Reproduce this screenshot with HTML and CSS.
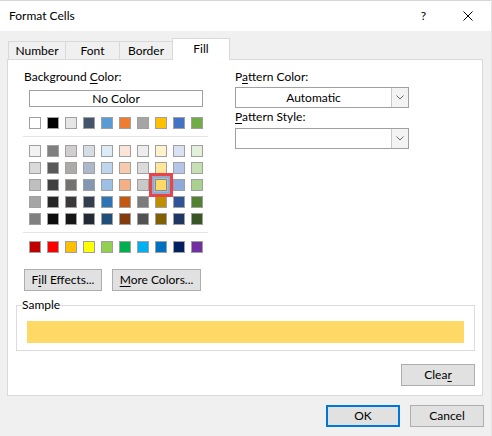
FILE: index.html
```html
<!DOCTYPE html>
<html>
<head>
<meta charset="utf-8">
<title>Format Cells</title>
<link rel="stylesheet" href="styles.css">
</head>
<body>
<div class="window">
  <div class="titlebar">
    <span class="title">Format Cells</span>
    <span class="help">?</span>
    <svg class="close" width="10" height="10" viewBox="0 0 10 10"><path d="M0.5 0.5 L9.5 9.5 M9.5 0.5 L0.5 9.5" stroke="#000" stroke-width="1" fill="none"/></svg>
  </div>
  <div class="content">
    <div class="tabs">
      <div class="tab t-number">Number</div>
      <div class="tab t-font">Font</div>
      <div class="tab t-border">Border</div>
      <div class="tab t-fill active">Fill</div>
    </div>
    <div class="panel">
      <div class="top">
        <div class="left">
          <div class="label">Background <u>C</u>olor:</div>
          <div class="nocolor">No Color</div>
          <div class="swrow theme">
            <span class="sw" style="background:#ffffff"></span>
            <span class="sw" style="background:#000000"></span>
            <span class="sw" style="background:#e7e6e6"></span>
            <span class="sw" style="background:#44546a"></span>
            <span class="sw" style="background:#5b9bd5"></span>
            <span class="sw" style="background:#ed7d31"></span>
            <span class="sw" style="background:#a5a5a5"></span>
            <span class="sw" style="background:#ffc000"></span>
            <span class="sw" style="background:#4472c4"></span>
            <span class="sw" style="background:#70ad47"></span>
          </div>
          <div class="sep"></div>
          <div class="grid">
            <span class="sw" style="background:#f2f2f2"></span>
            <span class="sw" style="background:#7f7f7f"></span>
            <span class="sw" style="background:#d0cece"></span>
            <span class="sw" style="background:#d6dce4"></span>
            <span class="sw" style="background:#ddebf7"></span>
            <span class="sw" style="background:#fce4d6"></span>
            <span class="sw" style="background:#ededed"></span>
            <span class="sw" style="background:#fff2cc"></span>
            <span class="sw" style="background:#d9e1f2"></span>
            <span class="sw" style="background:#e2efda"></span>

            <span class="sw" style="background:#d9d9d9"></span>
            <span class="sw" style="background:#595959"></span>
            <span class="sw" style="background:#aeaaaa"></span>
            <span class="sw" style="background:#acb9ca"></span>
            <span class="sw" style="background:#bdd7ee"></span>
            <span class="sw" style="background:#f8cbad"></span>
            <span class="sw" style="background:#dbdbdb"></span>
            <span class="sw" style="background:#ffe699"></span>
            <span class="sw" style="background:#b4c6e7"></span>
            <span class="sw" style="background:#c6e0b4"></span>

            <span class="sw" style="background:#bfbfbf"></span>
            <span class="sw" style="background:#404040"></span>
            <span class="sw" style="background:#757171"></span>
            <span class="sw" style="background:#8497b0"></span>
            <span class="sw" style="background:#9bc2e6"></span>
            <span class="sw" style="background:#f4b084"></span>
            <span class="sw" style="background:#c9c9c9"></span>
            <span class="sw selected" style="background:#ffd966"></span>
            <span class="sw" style="background:#8ea9db"></span>
            <span class="sw" style="background:#a9d08e"></span>

            <span class="sw" style="background:#a6a6a6"></span>
            <span class="sw" style="background:#262626"></span>
            <span class="sw" style="background:#3a3838"></span>
            <span class="sw" style="background:#333f4f"></span>
            <span class="sw" style="background:#2f75b5"></span>
            <span class="sw" style="background:#c65911"></span>
            <span class="sw" style="background:#7b7b7b"></span>
            <span class="sw" style="background:#bf8f00"></span>
            <span class="sw" style="background:#305496"></span>
            <span class="sw" style="background:#548235"></span>

            <span class="sw" style="background:#808080"></span>
            <span class="sw" style="background:#0d0d0d"></span>
            <span class="sw" style="background:#161616"></span>
            <span class="sw" style="background:#222b35"></span>
            <span class="sw" style="background:#1f4e78"></span>
            <span class="sw" style="background:#833c0c"></span>
            <span class="sw" style="background:#525252"></span>
            <span class="sw" style="background:#806000"></span>
            <span class="sw" style="background:#203764"></span>
            <span class="sw" style="background:#375623"></span>
          </div>
          <div class="sep"></div>
          <div class="swrow standard">
            <span class="sw" style="background:#c00000"></span>
            <span class="sw" style="background:#ff0000"></span>
            <span class="sw" style="background:#ffc000"></span>
            <span class="sw" style="background:#ffff00"></span>
            <span class="sw" style="background:#92d050"></span>
            <span class="sw" style="background:#00b050"></span>
            <span class="sw" style="background:#00b0f0"></span>
            <span class="sw" style="background:#0070c0"></span>
            <span class="sw" style="background:#002060"></span>
            <span class="sw" style="background:#7030a0"></span>
          </div>
          <div class="btnrow">
            <button class="btn b-fill">F<u>i</u>ll Effects...</button>
            <button class="btn b-more"><u>M</u>ore Colors...</button>
          </div>
        </div>
        <div class="right">
          <div class="label">P<u>a</u>ttern Color:</div>
          <div class="combo c1"><span class="combo-text">Automatic</span><span class="combo-btn"><svg width="8" height="5" viewBox="0 0 8 5"><path d="M0.5 0.5 L4 4 L7.5 0.5" stroke="#6a6a6a" fill="none" stroke-width="1"/></svg></span></div>
          <div class="label l2"><u>P</u>attern Style:</div>
          <div class="combo c2"><span class="combo-text"></span><span class="combo-btn"><svg width="8" height="5" viewBox="0 0 8 5"><path d="M0.5 0.5 L4 4 L7.5 0.5" stroke="#6a6a6a" fill="none" stroke-width="1"/></svg></span></div>
        </div>
      </div>
      <fieldset class="sample">
        <legend>Sample</legend>
        <div class="samplebar"></div>
      </fieldset>
      <div class="clearrow">
        <button class="btn b-clear">Clea<u>r</u></button>
      </div>
    </div>
    <div class="footer">
      <button class="btn b-ok">OK</button>
      <button class="btn b-cancel">Cancel</button>
    </div>
  </div>
</div>
</body>
</html>
```

FILE: styles.css
```css
html, body {
  margin: 0;
  padding: 0;
}
body {
  width: 492px;
  height: 436px;
  overflow: hidden;
  background: #f0f0f0;
  font-family: "Lato", "Noto Sans", sans-serif;
  font-size: 12px;
  line-height: 16px;
  color: #000;
}
u {
  text-decoration: underline;
  text-underline-offset: 2px;
}
.window {
  width: 491px;
  height: 436px;
  background: #f0f0f0;
  border-right: 1px solid #e3e3e3;
}
.titlebar {
  height: 31px;
  box-sizing: border-box;
  border-top: 1px solid #d6d6d6;
  background: #fff;
  display: flex;
  align-items: center;
  padding-left: 9px;
}
.title {
  font-size: 12px;
}
.help {
  margin-left: auto;
  margin-right: 37px;
  font-size: 12px;
}
.close {
  margin-right: 18px;
  display: block;
}
.content {
  padding: 7px 0 0 7px;
}
.tabs {
  display: flex;
  align-items: flex-end;
  margin-left: 1px;
}
.tab {
  height: 18px;
  box-sizing: border-box;
  border: 1px solid #d9d9d9;
  border-bottom: none;
  background: #f0f0f0;
  display: flex;
  align-items: center;
  justify-content: center;
  margin-left: -1px;
}
.tab:first-child {
  margin-left: 0;
}
.t-number { width: 58px; }
.t-font { width: 55px; }
.t-border { width: 54px; }
.t-fill { width: 58px; }
.tab.active {
  height: 22px;
  margin-bottom: -1px;
  background: #fff;
  position: relative;
  z-index: 1;
  padding-bottom: 1px;
}
.panel {
  width: 476px;
  box-sizing: border-box;
  border: 1px solid #d9d9d9;
  background: #fff;
  padding: 9px 7px 9px 8px;
}
.top {
  display: flex;
  align-items: flex-start;
}
.left {
  width: 185px;
  margin-left: 8px;
}
.label {
  height: 16px;
  white-space: nowrap;
}
.nocolor {
  margin: 5px 0 0 5px;
  width: 174px;
  height: 17px;
  box-sizing: border-box;
  border: 1px solid #a0a0a0;
  text-align: center;
  line-height: 15px;
}
.swrow {
  display: flex;
  gap: 6px;
  margin-left: 5px;
}
.swrow.theme {
  margin-top: 10px;
}
.swrow.standard {
  margin-top: 8px;
}
.sw {
  display: block;
  width: 12px;
  height: 12px;
  box-sizing: border-box;
  border: 1px solid #a0a0a0;
}
.sw.selected {
  position: relative;
  border-color: #8a8a8a;
  box-shadow: 0 0 0 1px #a9bcd2, 0 0 0 3px #93abc9, 0 0 0 6px #e9444c;
}
.sep {
  margin: 7px 0 0 -1px;
  width: 185px;
  height: 1px;
  background: #e3e3e3;
}
.grid {
  margin: 8px 0 0 5px;
  display: grid;
  grid-template-columns: repeat(10, 12px);
  column-gap: 6px;
  row-gap: 5px;
}
.btnrow {
  display: flex;
  gap: 10px;
  margin-top: 16px;
}
.btn {
  height: 22px;
  box-sizing: border-box;
  border: 1px solid #adadad;
  background: #e1e1e1;
  font-family: "Lato", "Noto Sans", sans-serif;
  font-size: 12px;
  line-height: 16px;
  color: #000;
  padding: 0;
  margin: 0;
  text-align: center;
  white-space: nowrap;
}
.b-fill { width: 78px; }
.b-more { width: 89px; }
.right {
  width: 174px;
  margin-left: 26px;
}
.combo {
  margin-top: 2px;
  height: 21px;
  box-sizing: border-box;
  border: 1px solid #a0a0a0;
  display: flex;
  background: #fff;
}
.combo.c2 {
  margin-top: 3px;
}
.label.l2 {
  margin-top: 1px;
}
.combo-text {
  flex: 1;
  text-align: center;
  line-height: 19px;
}
.combo-btn {
  width: 17px;
  box-sizing: border-box;
  border-left: 1px solid #c8c8c8;
  background: #f3f3f3;
  display: flex;
  align-items: center;
  justify-content: center;
}
.combo-btn svg {
  display: block;
}
.sample {
  margin: 6px 0 0 0;
  border: 1px solid #dcdcdc;
  padding: 0 10px 7px 5px;
  min-width: 0;
}
.sample legend {
  padding: 0;
  line-height: 16px;
}
.samplebar {
  margin: 8px 0 0 5px;
  height: 22px;
  background: #ffd966;
}
.clearrow {
  display: flex;
  justify-content: flex-end;
  margin-top: 13px;
}
.b-clear { width: 74px; }
.footer {
  width: 477px;
  display: flex;
  justify-content: flex-end;
  gap: 10px;
  margin-top: 9px;
}
.b-ok {
  width: 74px;
  border: 2px solid #0078d7;
}
.b-cancel { width: 74px; }
```
